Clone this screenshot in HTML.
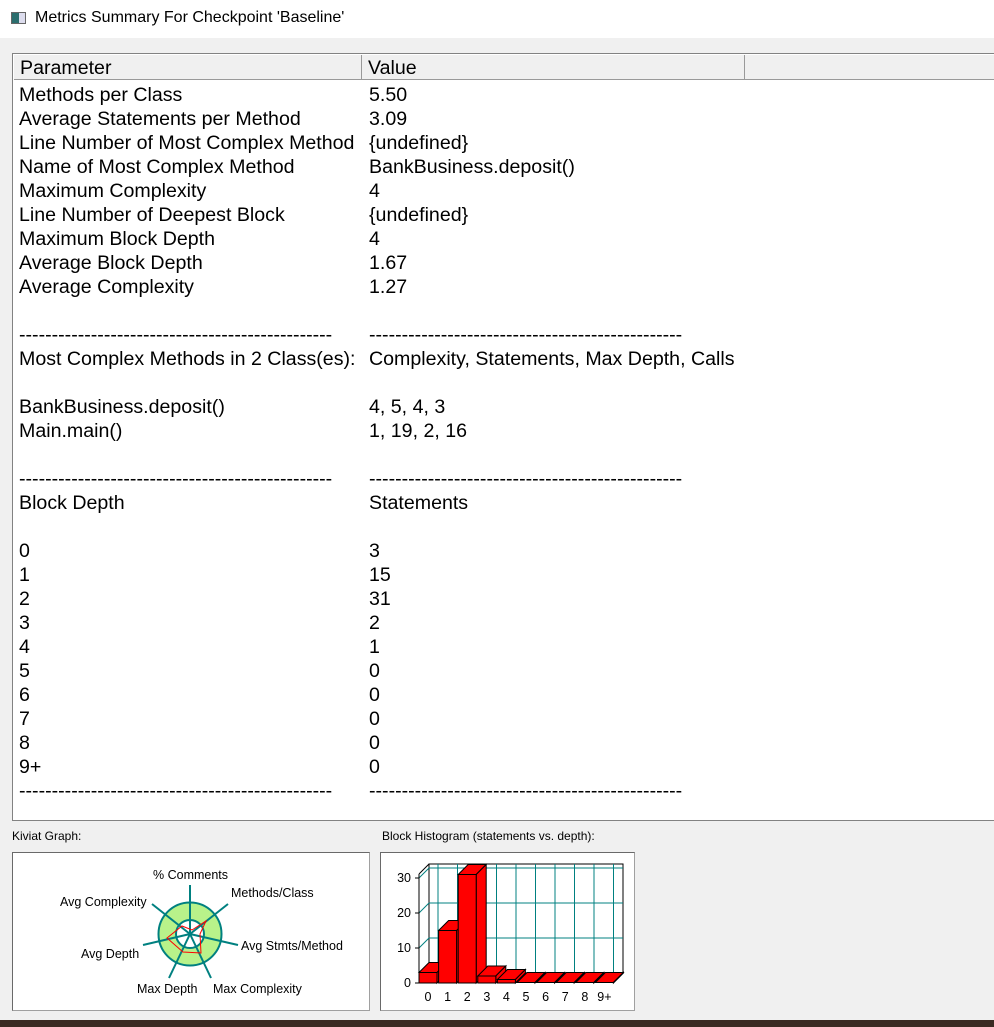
<!DOCTYPE html>
<html><head><meta charset="utf-8"><style>
*{margin:0;padding:0;box-sizing:border-box}
body{width:994px;height:1027px;background:#f0f0f0;position:relative;overflow:hidden;font-family:"Liberation Sans",Arial,sans-serif}
.title{position:absolute;left:0;top:0;width:994px;height:38px;background:#fff;font-size:16px;color:#000}
.title span{position:absolute;left:35px;top:9px}
.ico{position:absolute;left:11px;top:12px;width:15px;height:12px;border:1px solid #666;background:linear-gradient(90deg,#2b6e6e 0 55%,#dde 55%)}
.list{position:absolute;left:12px;top:53px;width:990px;height:768px;background:#fff;border:1px solid #828282;border-right:none}
.hdr{position:absolute;top:1px;height:25px;background:#f0f0f0;border-right:1px solid #999;border-bottom:1px solid #999;font-size:19.6px;padding-left:6px;line-height:27px}
.row{position:absolute;font-size:19.6px;line-height:25px;white-space:nowrap;color:#000}
.lab{position:absolute;font-size:12px;color:#000}
.box{position:absolute;background:#fff;border:1px solid #a0a0a0;border-top-color:#696969;border-left-color:#696969}
.strip{position:absolute;left:0;top:1020px;width:994px;height:7px;background:#3a2a22}
</style></head><body>
<div class="title"><div class="ico"></div><span>Metrics Summary For Checkpoint 'Baseline'</span></div>
<div class="list">
<div class="hdr" style="left:1px;width:348px">Parameter</div>
<div class="hdr" style="left:349px;width:383px">Value</div>
<div class="hdr" style="left:732px;width:260px"></div>
</div>
<div id="rows"></div>
<div class="lab" style="left:12px;top:829px">Kiviat Graph:</div>
<div class="lab" style="left:382px;top:829px">Block Histogram (statements vs. depth):</div>
<div class="box" style="left:12px;top:852px;width:358px;height:159px"></div>
<div class="box" style="left:380px;top:852px;width:255px;height:159px"></div>
<div class="strip"></div>
<svg style="position:absolute;left:0;top:0" width="994" height="1027" font-family="Liberation Sans, Arial, sans-serif" font-size="12.5">
<g stroke="#008080" stroke-width="2" fill="none">
<circle cx="190" cy="934" r="23" stroke="#b8f28a" stroke-width="17"/>
<circle cx="190" cy="934" r="31.5"/>
<circle cx="190" cy="934" r="14"/>
<line x1="190" y1="934" x2="190" y2="885"/>
<line x1="190" y1="934" x2="228" y2="904"/>
<line x1="190" y1="934" x2="238" y2="945"/>
<line x1="190" y1="934" x2="211" y2="978"/>
<line x1="190" y1="934" x2="169" y2="978"/>
<line x1="190" y1="934" x2="143" y2="945"/>
<line x1="190" y1="934" x2="152" y2="904"/>
</g>
<polygon points="192,930 206,921 200,934 201,953 183,952 167,938 182,926" fill="none" stroke="#f00" stroke-width="1"/>
<g fill="#000"><text x="153" y="879">% Comments</text><text x="231" y="897">Methods/Class</text><text x="60" y="906">Avg Complexity</text><text x="241" y="950">Avg Stmts/Method</text><text x="81" y="958">Avg Depth</text><text x="137" y="993">Max Depth</text><text x="213" y="993">Max Complexity</text></g>
<g id="hist"></g>
</svg>
<script>
var rows=[["Methods per Class","5.50"],["Average Statements per Method","3.09"],["Line Number of Most Complex Method","{undefined}"],["Name of Most Complex Method","BankBusiness.deposit()"],["Maximum Complexity","4"],["Line Number of Deepest Block","{undefined}"],["Maximum Block Depth","4"],["Average Block Depth","1.67"],["Average Complexity","1.27"],["",""],["D","D"],["Most Complex Methods in 2 Class(es):","Complexity, Statements, Max Depth, Calls"],["",""],["BankBusiness.deposit()","4, 5, 4, 3"],["Main.main()","1, 19, 2, 16"],["",""],["D","D"],["Block Depth","Statements"],["",""],["0","3"],["1","15"],["2","31"],["3","2"],["4","1"],["5","0"],["6","0"],["7","0"],["8","0"],["9+","0"],["D","D"]];
var d="-".repeat(48),h="";
rows.forEach(function(r,i){var t=83+i*24;
h+='<div class="row" style="left:19px;top:'+t+'px">'+(r[0]=="D"?d:r[0])+'</div><div class="row" style="left:369px;top:'+t+'px">'+(r[1]=="D"?d:r[1])+'</div>';});
document.getElementById("rows").innerHTML=h;
var s="",X0=419,Y0=983,dx=10,dy=-10,sc=3.5;
s+='<rect x="429" y="864" width="194" height="109" fill="#fff" stroke="#000"/>';
[938,903,868].forEach(function(y){s+='<line x1="429" y1="'+y+'" x2="623" y2="'+y+'" stroke="#008080"/><line x1="419" y1="'+(y+10)+'" x2="429" y2="'+y+'" stroke="#008080"/>';});
for(var k=0;k<10;k++){var x=438+k*19.5;s+='<line x1="'+x+'" y1="864" x2="'+x+'" y2="973" stroke="#008080"/>';}
s+='<line x1="419" y1="874" x2="419" y2="983" stroke="#000"/><line x1="419" y1="874" x2="429" y2="864" stroke="#000"/><line x1="419" y1="983" x2="429" y2="973" stroke="#000"/>';
[[0,983],[10,948],[20,913],[30,878]].forEach(function(a){s+='<line x1="415" y1="'+a[1]+'" x2="419" y2="'+a[1]+'" stroke="#000"/><text x="411" y="'+(a[1]+4)+'" text-anchor="end" font-size="12.5">'+a[0]+'</text>';});
var v=[3,15,31,2,1,0,0,0,0,0];
v.forEach(function(n,i){var x=X0+i*19.6,w=18,hgt=Math.max(n*sc,0.5),t=Y0-hgt;
s+='<polygon points="'+(x)+','+t+' '+(x+dx)+','+(t+dy)+' '+(x+w+dx)+','+(t+dy)+' '+(x+w)+','+t+'" fill="#f00" stroke="#000"/>';
s+='<polygon points="'+(x+w)+','+t+' '+(x+w+dx)+','+(t+dy)+' '+(x+w+dx)+','+(Y0+dy)+' '+(x+w)+','+Y0+'" fill="#f00" stroke="#000"/>';
if(n>0)s+='<rect x="'+x+'" y="'+t+'" width="'+w+'" height="'+hgt+'" fill="#f00" stroke="#000"/>';
s+='<text x="'+(x+9)+'" y="1001" text-anchor="middle" font-size="12.5">'+(i==9?"9+":i)+'</text>';});
document.getElementById("hist").innerHTML=s;
</script>
</body></html>
